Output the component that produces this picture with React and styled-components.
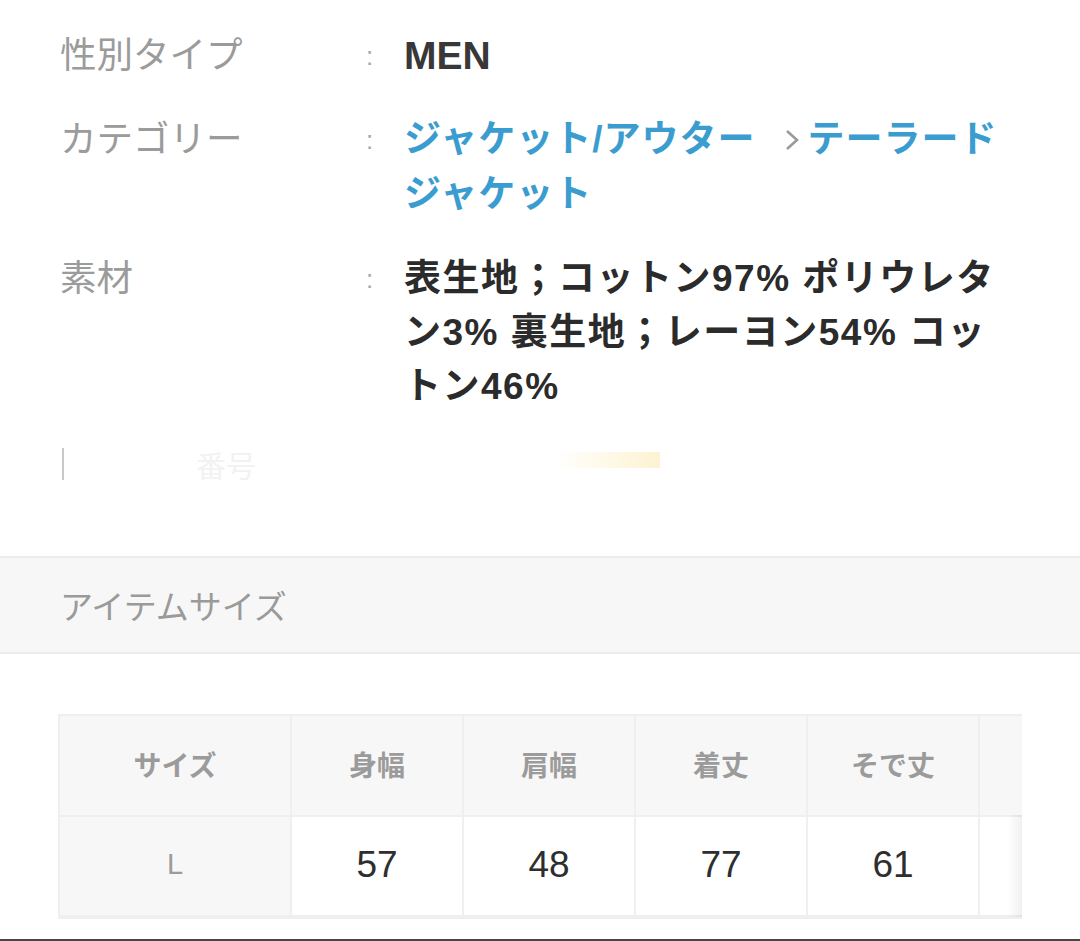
import React from "react";
import styled, { createGlobalStyle } from "styled-components";

const GlobalStyle = createGlobalStyle`
    * {
        box-sizing: border-box;
    }

    body {
        margin: 0;
        background-color: #FFFFFF;
        font-family: "Liberation Sans", "Noto Sans CJK JP", sans-serif;
    }
`;

const specs = [
    { label: "性別タイプ", type: "plain", value: "MEN" },
    { label: "カテゴリー", type: "category", value: ["ジャケット/アウター", "テーラードジャケット"] },
    { label: "素材", type: "bold", value: "表生地；コットン97% ポリウレタン3% 裏生地；レーヨン54% コットン46%" }
];

const columns = ["サイズ", "身幅", "肩幅", "着丈", "そで丈", "裄丈"];
const sizes = [{ size: "L", values: ["57", "48", "77", "61", ""] }];

function Chevron() {
    return (
        <svg width="20" height="26" viewBox="0 0 20 26">
            <path d="M5 4 L15 13 L5 22" fill="none" stroke="#9a9a9a" strokeWidth="2.6" />
        </svg>
    );
}

export default function App() {
    return (
        <Page>
            <GlobalStyle />
            <SpecList>
                {specs.map((spec, index) => (
                    <SpecRow key={index}>
                        <Label>{spec.label}</Label>
                        <Colon>:</Colon>
                        {spec.type === "category" ?
                            <Value width={602} spacing={1}>
                                <Link>{spec.value[0]}</Link>
                                <Sep><Chevron /></Sep>
                                <Link>{spec.value[1]}</Link>
                            </Value>
                            : spec.type === "bold" ?
                                <Value width={600} spacing={1.5}>{spec.value}</Value>
                                : <Plain>{spec.value}</Plain>}
                    </SpecRow>
                ))}
                <HiddenRow>
                    <span className="mark"></span>
                    <span className="label">番号</span>
                    <span className="smear"></span>
                </HiddenRow>
            </SpecList>

            <SectionBar>アイテムサイズ</SectionBar>

            <TableScroll>
                <SizeTable>
                    <colgroup>
                        <col style={{ width: "232px" }} />
                        {columns.slice(1).map((c) => <col key={c} style={{ width: "172px" }} />)}
                    </colgroup>
                    <thead>
                        <tr>
                            {columns.map((c) => <Head key={c}>{c}</Head>)}
                        </tr>
                    </thead>
                    <tbody>
                        {sizes.map((row) => (
                            <tr key={row.size}>
                                <SizeCell>{row.size}</SizeCell>
                                {row.values.map((v, i) => <Cell key={i}>{v}</Cell>)}
                            </tr>
                        ))}
                    </tbody>
                </SizeTable>
                <ScrollShade />
            </TableScroll>
        </Page>
    );
}

const Page = styled.div`
    width: 1080px;
    height: 941px;
    overflow: hidden;
    border-bottom: 2px solid #474747;
    background-color: #FFFFFF;
`;

const SpecList = styled.div`
    padding: 29px 60px 0 60px;

    display: flex;
    flex-direction: column;
    gap: 30px;
`;

const SpecRow = styled.div`
    display: grid;
    grid-template-columns: 306px 38px auto;

    font-size: 36px;
    line-height: 54px;
`;

const Label = styled.div`
    color: #9b9b9b;
    font-weight: 400;
    font-size: 36.5px;
`;

const Colon = styled.div`
    color: #a8a8a8;
    font-size: 26px;
`;

const Value = styled.div`
    width: ${(p) => p.width}px;
    color: #2b2b2b;
    font-size: 37px;
    font-weight: 700;
    letter-spacing: ${(p) => p.spacing}px;
`;

const Plain = styled.div`
    color: #383838;
    font-size: 39px;
    font-weight: 700;
`;

const Link = styled.span`
    color: #3b9dcf;
`;

const Sep = styled.span`
    display: inline-block;
    margin: 0 5px 0 27px;
    vertical-align: -1px;
`;

const HiddenRow = styled.div`
    height: 40px;
    display: flex;
    align-items: center;

    .mark {
        width: 2px;
        height: 32px;
        margin-left: 2px;
        background-color: #c9c9c9;
    }

    .label {
        margin-left: 132px;
        font-size: 30px;
        color: #f2f2f2;
    }

    .smear {
        width: 108px;
        height: 16px;
        margin: -8px 0 0 296px;
        background: linear-gradient(90deg, rgba(255, 255, 255, 0), #fdf3d2);
    }
`;

const SectionBar = styled.div`
    margin-top: 72px;
    height: 98px;
    padding-left: 60px;

    display: flex;
    align-items: center;

    background-color: #f7f7f7;
    border-top: 2px solid #ececec;
    border-bottom: 2px solid #ececec;

    font-size: 33px;
    color: #9a9a9a;
`;

const TableScroll = styled.div`
    position: relative;
    width: 964px;
    margin: 60px 0 0 58px;
    overflow: hidden;
    border-bottom: 2px solid #efefef;
`;

const SizeTable = styled.table`
    width: 1092px;
    table-layout: fixed;
    border-collapse: collapse;
`;

const Head = styled.th`
    height: 101px;
    padding-bottom: 4px;
    background-color: #f7f7f7;
    border: 2px solid #efefef;
    border-bottom: none;

    font-size: 28px;
    font-weight: 700;
    color: #9b9b9b;
    text-align: center;
`;

const SizeCell = styled.td`
    height: 100px;
    padding-bottom: 4px;
    background-color: #f7f7f7;
    border: 2px solid #efefef;

    font-size: 29px;
    color: #9b9b9b;
    text-align: center;
`;

const Cell = styled.td`
    height: 100px;
    padding-bottom: 4px;
    background-color: #FFFFFF;
    border: 2px solid #efefef;

    font-size: 37px;
    color: #2e2e2e;
    text-align: center;
`;

const ScrollShade = styled.div`
    position: absolute;
    right: 0;
    top: 101px;
    bottom: 0;
    width: 14px;
    background: linear-gradient(90deg, rgba(0, 0, 0, 0), rgba(0, 0, 0, 0.06));
`;
